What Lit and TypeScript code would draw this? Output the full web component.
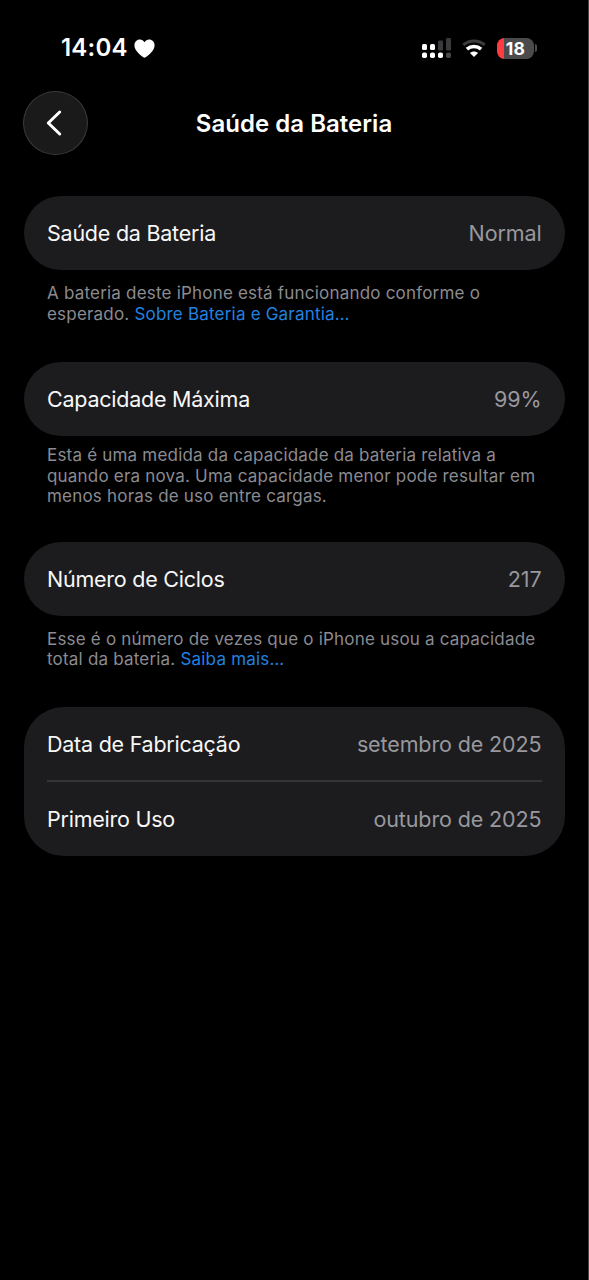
import { LitElement, html, css, svg } from "lit";
import { customElement, property } from "lit/decorators.js";

@customElement("status-bar")
class StatusBar extends LitElement {
  static styles = css`
    :host { display: flex; height: 91px; box-sizing: border-box; padding: 34px 51px 0 61px; align-items: flex-start; justify-content: space-between; }
    .side { display: flex; align-items: center; height: 28px; }
    .time { font-size: 24px; font-weight: 600; letter-spacing: 0.2px; line-height: 28px; color: #fff; }
    .heart { margin-left: 6px; }
    .wifi { margin: 0 11px 0 11px; }
    svg { display: block; }
    .battery { display: flex; align-items: center; gap: 1px; }
    .cell { width: 37px; height: 21px; border-radius: 7.5px; display: flex; align-items: center; justify-content: center; background: linear-gradient(90deg, #ff3b3f 0 7px, #4b4b4d 7px); color: #fff; font-size: 17.5px; font-weight: 700; letter-spacing: 0.2px; line-height: 21px; }
    .tip { width: 2px; height: 8px; border-radius: 0 2px 2px 0; background: #4b4b4d; }
  `;
  render() {
    return html`
      <div class="side">
        <span class="time">14:04</span>
        <svg class="heart" width="21" height="19" viewBox="0 0 21 19"><path fill="#fff" d="M10.5 18.7C9.8 18.7 0.4 12.8 0.4 6.3C0.4 2.8 2.8 .4 5.8 .4C7.9 .4 9.6 1.5 10.5 3.3C11.4 1.5 13.1 .4 15.2 .4C18.2 .4 20.6 2.8 20.6 6.3C20.6 12.8 11.2 18.7 10.5 18.7Z"/></svg>
      </div>
      <div class="side">
        <svg width="29" height="21" viewBox="0 0 29 21">
          ${[0, 8, 16, 24].map((x, i) => svg`<rect x=${x} y="14.5" width="5" height="5.5" rx="1.8" fill=${i < 3 ? "#fff" : "#48484a"}/>`)}
          <rect x="0" y="6" width="5" height="6" rx="1.5" fill="#fff"/>
          <rect x="8" y="6" width="5" height="6" rx="1.5" fill="#fff"/>
          <rect x="16" y="2.5" width="5" height="10" rx="1.3" fill="#3a3a3c"/>
          <rect x="24" y="0" width="5" height="12.5" rx="1.3" fill="#3a3a3c"/>
        </svg>
        <svg class="wifi" width="24" height="18" viewBox="0 0 24 18" fill="none">
          <path d="M1.3 5.8C7.3 .6 16.7 .6 22.7 5.8" stroke="#3c3c3e" stroke-width="3"/>
          <path d="M4.9 10.1C9 6.5 15 6.5 19.1 10.1" stroke="#fff" stroke-width="3.5"/>
          <path d="M12 18L8 14C10.3 12 13.7 12 16 14Z" fill="#fff"/>
        </svg>
        <div class="battery"><div class="cell">18</div><div class="tip"></div></div>
      </div>`;
  }
}

@customElement("nav-header")
class NavHeader extends LitElement {
  static styles = css`
    :host { display: grid; grid-template-columns: 65px 1fr 65px; align-items: center; padding: 0 23px; height: 64px; }
    .back { width: 65px; height: 64px; box-sizing: border-box; border: 1px solid #3b3b3d; border-radius: 50%; background: #1a1a1b; display: flex; align-items: center; justify-content: center; padding: 0 3px 0 0; }
    h1 { margin: 0; padding-top: 2px; text-align: center; color: #fff; font-size: 24px; line-height: 30px; font-weight: 600; letter-spacing: 0.03px; }
  `;
  render() {
    return html`
      <button class="back" aria-label="Voltar">
        <svg width="18" height="28" viewBox="0 0 18 28" fill="none"><path d="M14.7 3L3.3 14L14.7 25" stroke="#fff" stroke-width="3" stroke-linecap="round" stroke-linejoin="round"/></svg>
      </button>
      <h1>Saúde da Bateria</h1>`;
  }
}

@customElement("info-row")
class InfoRow extends LitElement {
  @property() label = "";
  @property() value = "";
  static styles = css`
    :host { display: flex; justify-content: space-between; align-items: center; height: 74px; font-size: 21.5px; line-height: 30px; }
    .label { color: #f7f7f8; letter-spacing: -0.24px; }
    .value { color: #98989e; letter-spacing: -0.12px; }
  `;
  render() {
    return html`<span class="label">${this.label}</span><span class="value">${this.value}</span>`;
  }
}

@customElement("app-root")
class AppRoot extends LitElement {
  static styles = css`
    :host { display: block; box-sizing: border-box; width: 589px; height: 1280px; background: #000; border-right: 1px solid #454545; font-family: Inter, "Liberation Sans", sans-serif; overflow: hidden; }
    main { padding: 41px 23px 0 23.5px; }
    .card { background: #1c1c1e; border-radius: 37px; padding: 0 23.5px; }
    .dates { height: 149px; border-radius: 40px; }
    .dates info-row:first-child { height: 73px; padding-top: 0.5px; box-sizing: border-box; }
    .divider { height: 1.5px; background: #343436; }
    p { margin: 0; padding: 0 24px 0 23.5px; color: #8b8b90; font-size: 17px; line-height: 20.5px; letter-spacing: 0.2px; white-space: nowrap; }
    .status { height: 78.5px; padding-top: 13px; }
    .capacity { height: 96.5px; padding-top: 9.5px; }
    .cycles { height: 78.5px; padding-top: 13px; }
    a { color: #2082e0; text-decoration: none; }
  `;
  render() {
    return html`
      <status-bar></status-bar>
      <nav-header></nav-header>
      <main>
        <div class="card"><info-row label="Saúde da Bateria" value="Normal"></info-row></div>
        <p class="status">A bateria deste iPhone está funcionando conforme o<br>esperado. <a>Sobre Bateria e Garantia…</a></p>
        <div class="card"><info-row label="Capacidade Máxima" value="99%"></info-row></div>
        <p class="capacity">Esta é uma medida da capacidade da bateria relativa a<br>quando era nova. Uma capacidade menor pode resultar em<br>menos horas de uso entre cargas.</p>
        <div class="card"><info-row label="Número de Ciclos" value="217"></info-row></div>
        <p class="cycles">Esse é o número de vezes que o iPhone usou a capacidade<br>total da bateria. <a>Saiba mais…</a></p>
        <div class="card dates">
          <info-row label="Data de Fabricação" value="setembro de 2025"></info-row>
          <div class="divider"></div>
          <info-row label="Primeiro Uso" value="outubro de 2025"></info-row>
        </div>
      </main>`;
  }
}
